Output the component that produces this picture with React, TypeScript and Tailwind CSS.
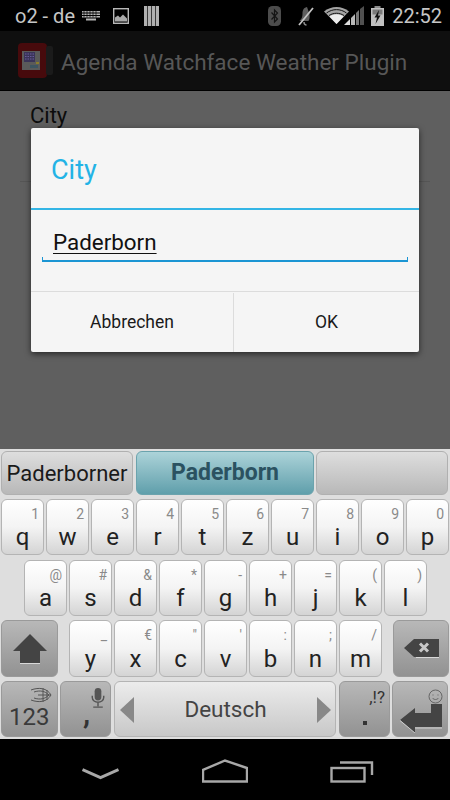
import type { ReactNode } from 'react';

function Key({ label, hint, width = 'w-[43px]' }: { label: string; hint: string; width?: string }) {
  return (
    <div
      className={`relative ${width} h-full shrink-0 rounded-[6px] border border-[#b4b4b4] bg-gradient-to-b from-[#ffffff] via-[#f4f4f4] to-[#d4d4d4] flex items-end justify-center pb-[2px] text-[24px] leading-[30px] text-[#222222]`}
    >
      <span className="absolute right-[4px] top-[4px] text-[14px] leading-[20px] text-[#8a8a8a]">{hint}</span>
      {label}
    </div>
  );
}

function DarkKey({ width, children }: { width: string; children: ReactNode }) {
  return (
    <div
      className={`relative ${width} h-full shrink-0 rounded-[6px] border border-[#9a9a9a] bg-gradient-to-b from-[#b8b8b8] to-[#929292] flex items-center justify-center`}
    >
      {children}
    </div>
  );
}

function StatusIcons() {
  return (
    <div className="flex items-center">
      {/* bluetooth */}
      <svg width="13" height="20" viewBox="0 0 13 20" className="mr-[17px]">
        <rect x="0" y="0" width="13" height="20" rx="4.500" fill="#4c4c4c" />
        <path d="M3.500 6.500l6 6.500-3 3V4l3 3-6 6.500" fill="none" stroke="#141414" strokeWidth="1.200" />
      </svg>
      {/* muted */}
      <svg width="16" height="20" viewBox="0 0 16 20" className="mr-[10px]">
        <path d="M9 1C5 2 4.500 5 4.500 8S3.500 13 1.500 15h9c1.500-2 1-5 1-7" fill="#5e5e5e" />
        <path d="M6 16c0 2 1 3 2.500 3" stroke="#8a8a8a" strokeWidth="1.500" fill="none" />
        <path d="M15 2L1 19" stroke="#c4c4c4" strokeWidth="1.800" />
      </svg>
      {/* wifi + signal */}
      <svg width="41" height="19" viewBox="0 0 41 19" className="mr-[6px]">
        <path d="M12.500 18L0 5.500c7-6 18-6 25 0z" fill="#a4a4a4" />
        <path d="M12.500 18L5.500 10.500c4-3 10-3 14 0z" fill="#ececec" />
        <path d="M2.500 7c6-4.500 14-4.500 20 0M5 9.500c4.500-3 10.500-3 15 0" stroke="#111" strokeWidth="1" fill="none" />
        <path d="M20 19l6-6v6z" fill="#dddddd" />
        <path d="M27 19v-7l4-4v11z" fill="#b8b8b8" />
        <path d="M32 19V7l3-3v15z" fill="#777777" />
        <path d="M36 19V3l4-3v19z" fill="#505050" />
      </svg>
      {/* battery charging */}
      <svg width="13" height="20" viewBox="0 0 13 20" className="mr-[8px]">
        <rect x="3.500" y="0" width="6" height="2" fill="#8c8c8c" />
        <rect x="0" y="2" width="13" height="18" fill="#c0c0c0" />
        <rect x="1.500" y="3.500" width="10" height="5" fill="#7a7a7a" />
        <path d="M8 4L3.500 11.500H6L4.500 18 9.500 9.500H7z" fill="#141414" />
      </svg>
      <span className="text-[20px] leading-[24px] text-[#c6c6c6]">22:52</span>
    </div>
  );
}

export default function App() {
  return (
    <div className="flex h-[800px] w-[450px] flex-col overflow-hidden bg-black font-['Roboto',sans-serif]">
      {/* status bar */}
      <div className="flex h-[31px] shrink-0 items-center justify-between pl-[15px] pr-[8px]">
        <div className="flex items-center">
          <span className="text-[20px] leading-[24px] text-[#c6c6c6]">o2 - de</span>
          <svg width="18" height="10" viewBox="0 0 18 10" className="ml-[7px]" fill="#b4b4b4">
            <path d="M0 0h18v1.500H0zM0 2.500h18V4H0zM0 5h18v1.500H0zM4 7.500h10V9.500H4z" />
            <path d="M2 0v6.500M5 0v6.500M8 0v6.500M11 0v6.500M14 0v6.500" stroke="#000" strokeWidth="0.700" />
          </svg>
          <svg width="16" height="16" viewBox="0 0 16 16" className="ml-[13px]">
            <rect x="0.700" y="0.700" width="14.600" height="14.600" fill="none" stroke="#b8b8b8" strokeWidth="1.400" />
            <path d="M2 13.500v-4l3-2 2 2 3-3 4 4v3z" fill="#a8a8a8" />
          </svg>
          <svg width="15" height="20" viewBox="0 0 15 20" className="ml-[15px]" fill="#b0b0b0">
            <rect x="0" y="0" width="15" height="20" />
            <path d="M3.500 0v20M7.500 0v20M11.500 0v20" stroke="#3a3a3a" strokeWidth="1" />
          </svg>
        </div>
        <StatusIcons />
      </div>

      {/* action bar */}
      <div className="flex h-[60px] shrink-0 items-center border-b border-[#000] bg-[#0f0f0f] pl-[18px]">
        <svg width="35" height="35" viewBox="0 0 35 35">
          <rect x="0" y="0" width="29" height="35" rx="4" fill="#470a0c" />
          <rect x="28" y="3" width="7" height="29" rx="2" fill="#1b1b1b" />
          <rect x="4" y="8" width="18" height="19" fill="#5a5a5a" />
          <rect x="6" y="9" width="11" height="10" fill="#3a3458" />
          <path d="M7 11h9M7 13.500h9M7 16h9" stroke="#6a5a9a" strokeWidth="1.200" strokeDasharray="1.500 1" />
          <rect x="12" y="22" width="8" height="3" fill="#3d5560" />
          <rect x="18" y="19" width="3" height="2" fill="#8a7d2a" />
        </svg>
        <span className="ml-[8px] mt-[3px] text-[22.5px] leading-[30px] text-[#575757]">Agenda Watchface Weather Plugin</span>
      </div>

      {/* dimmed settings page with the dialog on top */}
      <div className="relative min-h-0 flex-1 bg-[#5f5f5f]">
        <div className="pl-[30px] pt-[10px] text-[22px] leading-[30px] text-[#0c0c0c]">City</div>
        <div className="mx-[20px] mt-[50px] h-px bg-[#555555]" />

        <div className="absolute left-[31px] top-[37px] flex h-[224px] w-[388px] flex-col rounded-[2px] bg-[#f5f5f5] shadow-[0_2px_6px_rgba(0,0,0,0.6)]">
          <div className="flex h-[80px] shrink-0 items-center pl-[20px] pt-[3px] text-[27px] leading-[34px] text-[#23b3e6]">City</div>
          <div className="h-[2px] shrink-0 bg-[#33b5e5]" />
          <div className="relative h-[81px] shrink-0 pl-[22px] pt-[18px]">
            <span className="text-[22.4px] leading-[29px] text-[#111111] underline underline-offset-[3px] decoration-1">Paderborn</span>
            <div className="absolute bottom-[29px] left-[11px] right-[11px] h-[5px] border-x border-b-2 border-[#1b95d3]" />
          </div>
          <div className="flex min-h-0 flex-1 border-t border-[#dcdcdc] pt-[1px] text-[17.5px] text-[#1a1a1a]">
            <div className="flex w-[203px] items-center justify-center border-r border-[#dcdcdc]">Abbrechen</div>
            <div className="flex flex-1 items-center justify-center">OK</div>
          </div>
        </div>
      </div>

      {/* keyboard */}
      <div className="flex h-[290px] shrink-0 flex-col bg-[#dedede] pt-[2px]">
        <div className="flex h-[44px] pl-[1px]">
          <div className="flex w-[132px] items-center justify-center rounded-[6px] border border-[#b0b0b0] bg-gradient-to-b from-[#dedede] to-[#b8b8b8] pt-[1px] text-[22px] text-[#1a1a1a]">
            Paderborner
          </div>
          <div className="ml-[3px] flex w-[178px] items-center justify-center rounded-[6px] border border-[#6ba3ad] bg-gradient-to-b from-[#acd3d9] to-[#5f9fab] pt-[1px] text-[23px] font-bold text-[#2b5261]">
            Paderborn
          </div>
          <div className="ml-[2px] w-[132px] rounded-[6px] border border-[#b0b0b0] bg-gradient-to-b from-[#dedede] to-[#b8b8b8]" />
        </div>

        <div className="mt-[4px] flex h-[56px] gap-[2px] pl-[1px]">
          <Key label="q" hint="1" />
          <Key label="w" hint="2" />
          <Key label="e" hint="3" />
          <Key label="r" hint="4" />
          <Key label="t" hint="5" />
          <Key label="z" hint="6" />
          <Key label="u" hint="7" />
          <Key label="i" hint="8" />
          <Key label="o" hint="9" />
          <Key label="p" hint="0" />
        </div>

        <div className="mt-[5px] flex h-[56px] gap-[2px] pl-[24px]">
          <Key label="a" hint="@" />
          <Key label="s" hint="#" />
          <Key label="d" hint="&" />
          <Key label="f" hint="*" />
          <Key label="g" hint="-" />
          <Key label="h" hint="+" />
          <Key label="j" hint="=" />
          <Key label="k" hint="(" />
          <Key label="l" hint=")" />
        </div>

        <div className="mt-[4px] flex h-[57px] pl-[1px]">
          <DarkKey width="w-[57px]">
            <svg width="34" height="30" viewBox="0 0 34 30">
              <path d="M17 0L0 17h7v12h20V17h7z" fill="#444444" />
              <path d="M7 29.500h20" stroke="#d8d8d8" strokeWidth="1" />
            </svg>
          </DarkKey>
          <div className="ml-[11px] flex h-full gap-[2px]">
            <Key label="y" hint="_" />
            <Key label="x" hint="€" />
            <Key label="c" hint={'"'} />
            <Key label="v" hint="'" />
            <Key label="b" hint=":" />
            <Key label="n" hint=";" />
            <Key label="m" hint="/" />
          </div>
          <div className="ml-[11px]">
            <DarkKey width="w-[56px]">
              <svg width="35" height="19" viewBox="0 0 35 19">
                <path d="M10 0h25v18H10L0 9z" fill="#444444" />
                <path d="M12 18.500h23" stroke="#d8d8d8" strokeWidth="1" />
                <path d="M16 4.500l8 8M24 4.500l-8 8" stroke="#c8c8c8" strokeWidth="3" />
              </svg>
            </DarkKey>
          </div>
        </div>

        <div className="mt-[4px] flex h-[56px] pl-[1px]">
          <DarkKey width="w-[57px]">
            <svg width="22" height="16" viewBox="0 0 22 16" className="absolute right-[5px] top-[5px]" fill="none" stroke="#555555" strokeWidth="1">
              <path d="M1 3c8-3 16-2 20 5-4 7-12 8-20 5M4 5c6-2 11-1 15 3-4 4-9 5-15 3M8 8h13M13 1v14M17 3v10" />
            </svg>
            <span className="absolute bottom-[4px] left-[7px] text-[24px] leading-[30px] text-[#3a3a3a]">123</span>
          </DarkKey>
          <div className="ml-[2px]">
            <DarkKey width="w-[51px]">
              <svg width="14" height="21" viewBox="0 0 14 22" className="absolute right-[5px] top-[6px]">
                <rect x="3.500" y="0" width="7" height="13" rx="3.500" fill="#555555" />
                <path d="M1 8v2c0 3 3 5 6 5s6-2 6-5V8M7 15v4M2 20h10" fill="none" stroke="#555555" strokeWidth="1.500" />
              </svg>
              <span className="absolute bottom-[8px] left-[22px] text-[32px] font-medium leading-[30px] text-[#333333]">,</span>
            </DarkKey>
          </div>
          <div className="ml-[3px] flex h-full w-[222px] items-center justify-between rounded-[6px] border border-[#b4b4b4] bg-gradient-to-b from-[#ececec] to-[#c8c8c8] pl-[5px] pr-[4px] pt-[2px] text-[22.5px] text-[#444444]">
            <svg width="14" height="26" viewBox="0 0 14 26"><path d="M14 0v26L0 13z" fill="#888888" /></svg>
            Deutsch
            <svg width="14" height="26" viewBox="0 0 14 26"><path d="M0 0v26l14-13z" fill="#888888" /></svg>
          </div>
          <div className="ml-[3px]">
            <DarkKey width="w-[51px]">
              <span className="absolute right-[4px] top-[3px] text-[17px] leading-[24px] text-[#333333]">,!?</span>
              <span className="absolute bottom-[11px] left-[23px] h-[4px] w-[4px] bg-[#333333]" />
            </DarkKey>
          </div>
          <div className="ml-[2px]">
            <DarkKey width="w-[56px]">
              <svg width="15" height="15" viewBox="0 0 15 15" className="absolute right-[4px] top-[7px]" fill="none" stroke="#666666" strokeWidth="1">
                <circle cx="7.500" cy="7.500" r="6.500" />
                <path d="M4.500 9c1.500 2 4.500 2 6 0M5 5.500v1M10 5.500v1" />
              </svg>
              <svg width="42" height="29" viewBox="0 0 42 29" className="absolute bottom-[3px] left-[7px]">
                <path d="M31 0h11v23H15v6L0 16 15 4v5h16z" fill="#444444" />
                <path d="M15 24h27M0 16.500L15 29" stroke="#e0e0e0" strokeWidth="0.800" fill="none" />
              </svg>
            </DarkKey>
          </div>
        </div>
      </div>

      {/* nav bar */}
      <div className="flex h-[61px] shrink-0 items-start bg-black pl-[82px] pt-[20px]">
        <svg width="37" height="12" viewBox="0 0 37 12" className="mt-[9px]">
          <path d="M0.500 1.500L18.500 9.500l18-8" fill="none" stroke="#a8a8a8" strokeWidth="3" />
        </svg>
        <svg width="46" height="24" viewBox="0 0 46 24" className="ml-[83px]">
          <path d="M1 22.500V11L23 1.500 45 9v13.500z" fill="none" stroke="#a8a8a8" strokeWidth="2.400" />
        </svg>
        <svg width="44" height="22" viewBox="0 0 44 22" className="ml-[82px] mt-[2px]">
          <path d="M10 1.500h32V14" fill="none" stroke="#a8a8a8" strokeWidth="2.400" />
          <rect x="1.500" y="7" width="33" height="13.500" fill="none" stroke="#a8a8a8" strokeWidth="2.400" />
        </svg>
      </div>
    </div>
  );
}
